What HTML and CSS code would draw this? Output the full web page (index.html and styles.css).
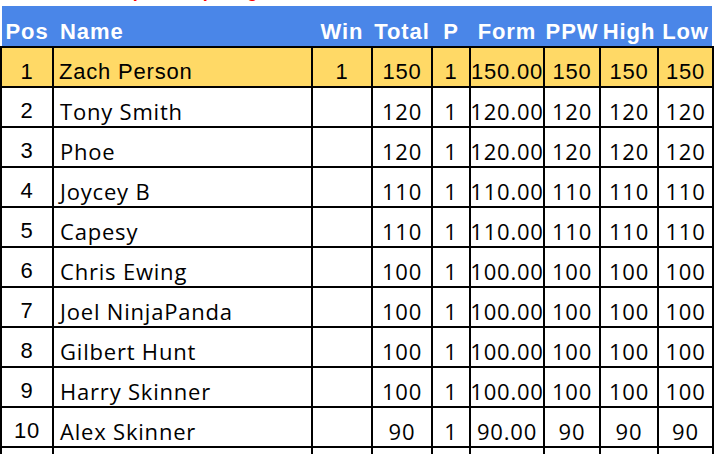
FILE: index.html
```html
<!DOCTYPE html>
<html>
<head>
<meta charset="utf-8">
<link rel="stylesheet" href="styles.css">
</head>
<body>
<div class="sheet">
  <div class="title"><span class="title-text">Table as at updated: post-gameweek 1 results table</span></div>
  <div class="head">
    <div class="h">Pos</div>
    <div class="h h-name">Name</div>
    <div class="h">Win</div>
    <div class="h">Total</div>
    <div class="h">P</div>
    <div class="h">Form</div>
    <div class="h">PPW</div>
    <div class="h">High</div>
    <div class="h">Low</div>
  </div>
  <div class="grid">
    <div class="c lead first">1</div><div class="c lead name">Zach Person</div><div class="c lead">1</div><div class="c lead">150</div><div class="c lead">1</div><div class="c lead">150.00</div><div class="c lead">150</div><div class="c lead">150</div><div class="c lead">150</div>

    <div class="c pos">2</div><div class="c name">Tony Smith</div><div class="c"></div><div class="c">120</div><div class="c">1</div><div class="c">120.00</div><div class="c">120</div><div class="c">120</div><div class="c">120</div>

    <div class="c pos">3</div><div class="c name">Phoe</div><div class="c"></div><div class="c">120</div><div class="c">1</div><div class="c">120.00</div><div class="c">120</div><div class="c">120</div><div class="c">120</div>

    <div class="c pos">4</div><div class="c name">Joycey B</div><div class="c"></div><div class="c">110</div><div class="c">1</div><div class="c">110.00</div><div class="c">110</div><div class="c">110</div><div class="c">110</div>

    <div class="c pos">5</div><div class="c name">Capesy</div><div class="c"></div><div class="c">110</div><div class="c">1</div><div class="c">110.00</div><div class="c">110</div><div class="c">110</div><div class="c">110</div>

    <div class="c pos">6</div><div class="c name">Chris Ewing</div><div class="c"></div><div class="c">100</div><div class="c">1</div><div class="c">100.00</div><div class="c">100</div><div class="c">100</div><div class="c">100</div>

    <div class="c pos">7</div><div class="c name">Joel NinjaPanda</div><div class="c"></div><div class="c">100</div><div class="c">1</div><div class="c">100.00</div><div class="c">100</div><div class="c">100</div><div class="c">100</div>

    <div class="c pos">8</div><div class="c name">Gilbert Hunt</div><div class="c"></div><div class="c">100</div><div class="c">1</div><div class="c">100.00</div><div class="c">100</div><div class="c">100</div><div class="c">100</div>

    <div class="c pos">9</div><div class="c name">Harry Skinner</div><div class="c"></div><div class="c">100</div><div class="c">1</div><div class="c">100.00</div><div class="c">100</div><div class="c">100</div><div class="c">100</div>

    <div class="c pos">10</div><div class="c name">Alex Skinner</div><div class="c"></div><div class="c">90</div><div class="c">1</div><div class="c">90.00</div><div class="c">90</div><div class="c">90</div><div class="c">90</div>

    <div class="c"></div><div class="c"></div><div class="c"></div><div class="c"></div><div class="c"></div><div class="c"></div><div class="c"></div><div class="c"></div><div class="c"></div>
  </div>
</div>
</body>
</html>
```
FILE: styles.css
```css
html, body {
  margin: 0;
  padding: 0;
  background: #ffffff;
}
body {
  width: 714px;
  height: 454px;
  overflow: hidden;
}
.sheet {
  width: 714px;
  height: 454px;
  overflow: hidden;
}
.title {
  height: 6px;
  overflow: hidden;
  padding-left: 25px;
}
.title-text {
  display: block;
  margin-top: -19px;
  font-family: "Liberation Sans", Arial, sans-serif;
  font-weight: bold;
  font-size: 18px;
  line-height: 20px;
  color: #ff0000;
  white-space: nowrap;
}
.head,
.grid {
  display: grid;
  grid-template-columns: 50px 257px 58px 58px 36px 72px 54px 56px 53px;
  column-gap: 2px;
}
.head {
  margin: 0 2px;
  height: 40px;
  background: #4a86e8;
}
.h {
  display: flex;
  align-items: flex-end;
  justify-content: center;
  padding-bottom: 3px;
  font-family: "Liberation Sans", Arial, sans-serif;
  font-weight: bold;
  font-size: 22px;
  line-height: 22px;
  letter-spacing: 0.9px;
  color: #ffffff;
  white-space: nowrap;
}
.h-name {
  justify-content: flex-start;
  padding-left: 6px;
}
.grid {
  height: 408px;
  overflow: hidden;
  background: #000000;
  padding: 2px 2px 0 2px;
  row-gap: 2px;
  grid-auto-rows: 38px;
}
.c {
  box-sizing: border-box;
  display: flex;
  align-items: flex-end;
  justify-content: center;
  padding-bottom: 4px;
  background: #ffffff;
  font-family: "Open Sans", sans-serif;
  font-size: 22px;
  line-height: 22px;
  letter-spacing: 0.8px;
  color: #000000;
  white-space: nowrap;
}
.c.pos {
  font-family: "Liberation Sans", Arial, sans-serif;
}
.c.name {
  justify-content: flex-start;
  padding-left: 6px;
}
.c.lead {
  background: #ffd966;
  font-family: "Liberation Sans", Arial, sans-serif;
  padding-bottom: 3px;
}
.c.lead.name {
  padding-left: 5px;
}
```
